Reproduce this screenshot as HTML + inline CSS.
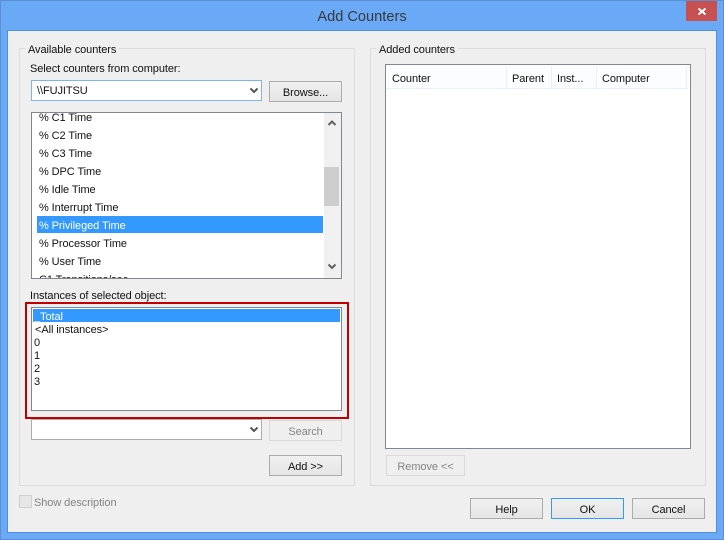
<!DOCTYPE html>
<html><head><meta charset="utf-8"><style>
html,body{margin:0;padding:0;width:724px;height:540px;overflow:hidden;background:#69a9f5}
*{box-sizing:border-box}
div,span{position:absolute}
.t{font:11px/14px "Liberation Sans",sans-serif;color:#111;white-space:nowrap;letter-spacing:-0.08px}
.btn{border:1px solid #acacac;background:linear-gradient(#f0f0f0,#e5e5e5);font:11px/23px "Liberation Sans",sans-serif;letter-spacing:-0.08px;color:#111;text-align:center;width:73px;height:21px;overflow:hidden}
.dis{border-color:#d9d9d9;background:#efefef;color:#838383}
.grp{border:1px solid #dcdcdc}
.w{background:#fff;border:1px solid #838591}
.sep{width:1px;top:66px;height:23px;background:#e8f0f9}
</style></head><body>
<div style="left:0;top:0;width:724px;height:540px;border:1px solid #5b8fd0"></div>
<div style="left:7px;top:30px;width:710px;height:503px;border:1px solid #4f8fd8;background:#efefef"></div>
<div class="t" style="left:0;top:7px;width:724px;text-align:center;font-size:14.6px;line-height:20px;color:#3a3a3a;letter-spacing:0">Add Counters</div>
<div style="left:686px;top:1px;width:31px;height:20px;background:#c75050"></div>
<svg style="position:absolute;left:697px;top:7px" width="10" height="9"><path d="M1.5 1.5L8.5 7.5M8.5 1.5L1.5 7.5" stroke="#fff" stroke-width="2" fill="none"/></svg>

<div class="grp" style="left:19px;top:48px;width:336px;height:438px"></div>
<div class="t" style="left:25px;top:43px;background:#efefef;padding:0 3px">Available counters</div>
<div class="t" style="left:30px;top:62px">Select counters from computer:</div>
<div style="left:31px;top:80px;width:231px;height:21px;background:#fff;border:1px solid #7eb4ea"></div>
<div class="t" style="left:37px;top:84px">\\FUJITSU</div>
<svg style="position:absolute;left:249px;top:87px" width="10" height="8"><path d="M1.5 1.5L5 5L8.5 1.5" stroke="#555" stroke-width="2" fill="none"/></svg>
<div class="btn" style="left:269px;top:81px">Browse...</div>

<div class="w" style="left:31px;top:112px;width:311px;height:167px;overflow:hidden"></div>
<div style="left:32px;top:113px;width:309px;height:165px;overflow:hidden">
<div class="t" style="left:7px;top:-2px">% C1 Time</div>
<div class="t" style="left:7px;top:16px">% C2 Time</div>
<div class="t" style="left:7px;top:34px">% C3 Time</div>
<div class="t" style="left:7px;top:52px">% DPC Time</div>
<div class="t" style="left:7px;top:70px">% Idle Time</div>
<div class="t" style="left:7px;top:88px">% Interrupt Time</div>
<div style="left:5px;top:103px;width:286px;height:17px;background:#3399ff"></div>
<div class="t" style="left:7px;top:106px;color:#fff">% Privileged Time</div>
<div class="t" style="left:7px;top:124px">% Processor Time</div>
<div class="t" style="left:7px;top:142px">% User Time</div>
<div class="t" style="left:7px;top:160px">C1 Transitions/sec</div>
<div style="left:292px;top:0;width:17px;height:165px;background:#f0f0f0"></div>
<div style="left:292px;top:54px;width:15px;height:39px;background:#cdcdcd"></div>
<svg style="position:absolute;left:295px;top:6px" width="10" height="8"><path d="M1.5 6L5 2.5L8.5 6" stroke="#606060" stroke-width="2" fill="none"/></svg>
<svg style="position:absolute;left:295px;top:150px" width="10" height="8"><path d="M1.5 1.5L5 5L8.5 1.5" stroke="#606060" stroke-width="2" fill="none"/></svg>
</div>

<div class="t" style="left:30px;top:289px">Instances of selected object:</div>
<div style="left:25px;top:302px;width:324px;height:117px;border:2px solid #c00000"></div>
<div class="w" style="left:31px;top:307px;width:311px;height:104px"></div>
<div style="left:33px;top:309px;width:307px;height:13px;background:#3399ff"></div>
<div class="t" style="left:34px;top:310px;color:#fff">_Total</div>
<div class="t" style="left:35px;top:323px">&lt;All instances&gt;</div>
<div class="t" style="left:34px;top:336px">0</div>
<div class="t" style="left:34px;top:349px">1</div>
<div class="t" style="left:34px;top:362px">2</div>
<div class="t" style="left:34px;top:375px">3</div>

<div style="left:31px;top:419px;width:231px;height:21px;background:#fff;border:1px solid #acacac"></div>
<svg style="position:absolute;left:249px;top:426px" width="10" height="8"><path d="M1.5 1.5L5 5L8.5 1.5" stroke="#555" stroke-width="2" fill="none"/></svg>
<div class="btn dis" style="left:269px;top:420px">Search</div>
<div class="btn" style="left:269px;top:455px">Add &gt;&gt;</div>

<div style="left:19px;top:495px;width:13px;height:13px;background:#e6e6e6;border:1px solid #d0d0d0"></div>
<div class="t" style="left:34px;top:496px;color:#838383">Show description</div>

<div class="grp" style="left:370px;top:48px;width:336px;height:438px"></div>
<div class="t" style="left:376px;top:43px;background:#efefef;padding:0 3px">Added counters</div>
<div class="w" style="left:385px;top:64px;width:306px;height:385px"></div>
<div style="left:386px;top:65px;width:302px;height:24px;background:#fcfdff;border-bottom:1px solid #e8f0f9"></div>
<div class="sep" style="left:506px"></div>
<div class="sep" style="left:551px"></div>
<div class="sep" style="left:596px"></div>
<div class="sep" style="left:686px"></div>
<div class="t" style="left:392px;top:72px">Counter</div>
<div class="t" style="left:512px;top:72px">Parent</div>
<div class="t" style="left:557px;top:72px">Inst...</div>
<div class="t" style="left:602px;top:72px">Computer</div>
<div class="btn dis" style="left:386px;top:455px;width:79px">Remove &lt;&lt;</div>

<div class="btn" style="left:470px;top:498px">Help</div>
<div class="btn" style="left:551px;top:498px;border-color:#3399ff">OK</div>
<div class="btn" style="left:632px;top:498px">Cancel</div>
</body></html>
